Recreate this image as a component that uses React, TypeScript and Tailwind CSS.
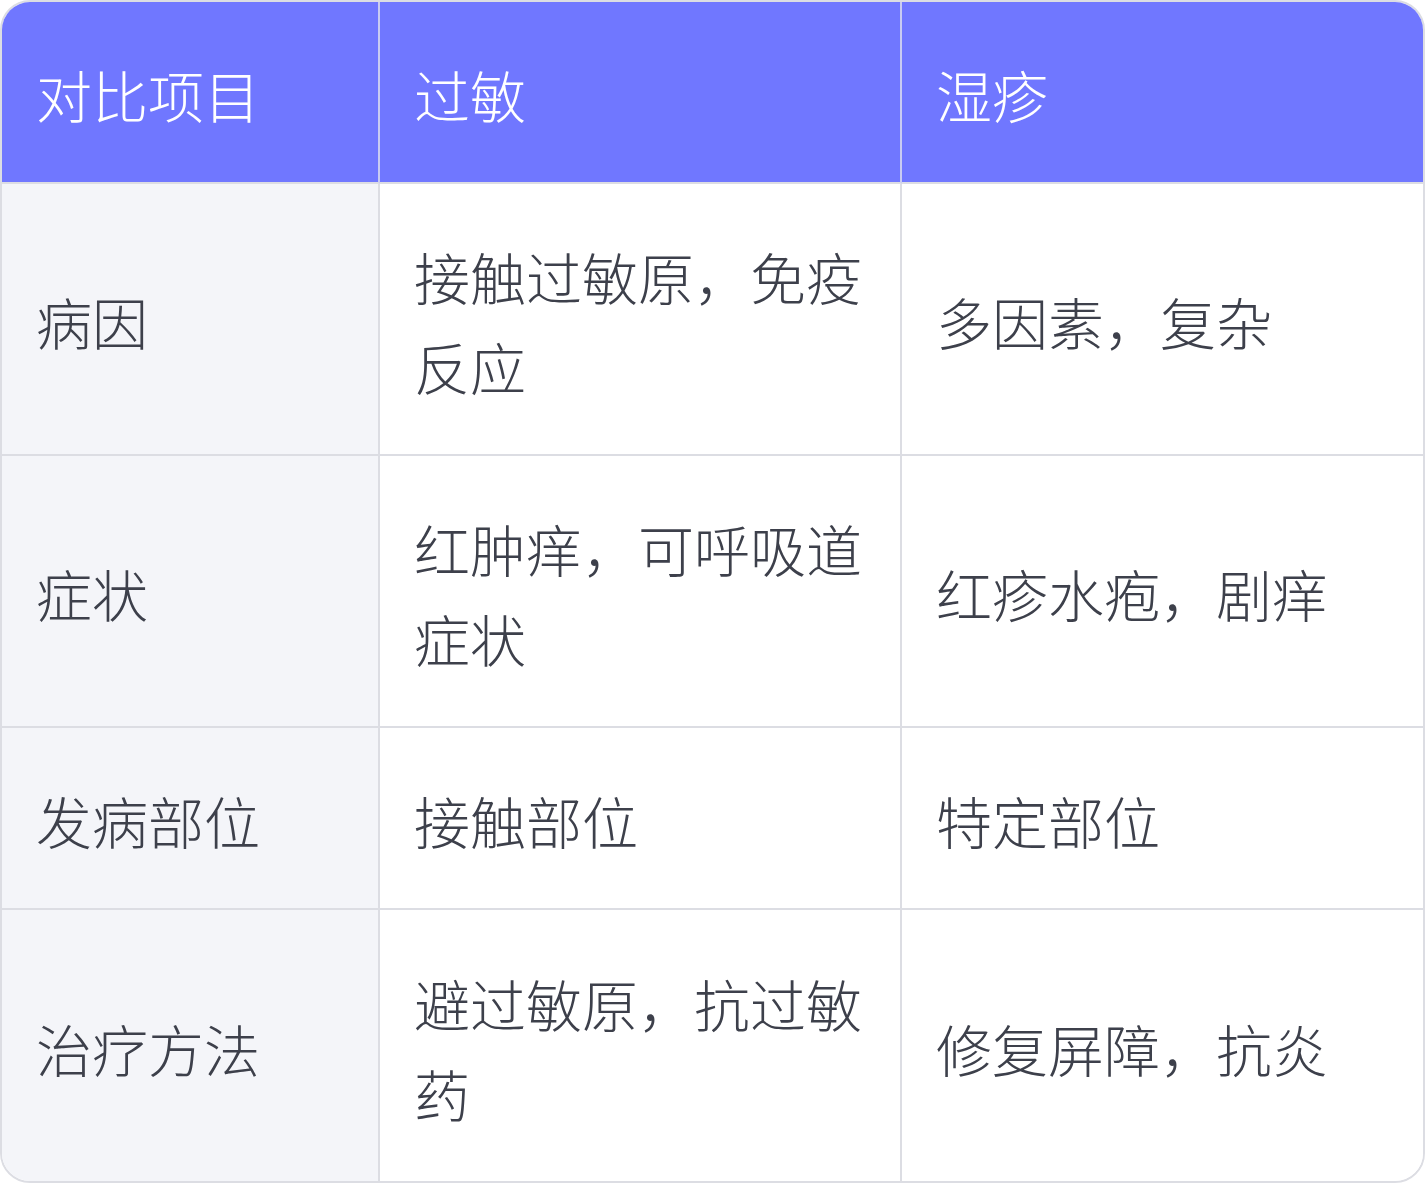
import * as React from "react";

const rows = [
  { label: "病因", allergy: "接触过敏原，免疫反应", eczema: "多因素，复杂" },
  { label: "症状", allergy: "红肿痒，可呼吸道症状", eczema: "红疹水疱，剧痒" },
  { label: "发病部位", allergy: "接触部位", eczema: "特定部位" },
  { label: "治疗方法", allergy: "避过敏原，抗过敏药", eczema: "修复屏障，抗炎" },
];

const font = { fontFamily: '"Noto Sans CJK SC", "Noto Sans", sans-serif' };

export default function App() {
  return (
    <div className="w-[1425px] h-[1183px] bg-white" style={font}>
      <div className="w-full h-full rounded-[30px] border-2 border-[#dcdde3] overflow-hidden grid grid-cols-[378px_522px_1fr] grid-rows-[182px_272px_272px_182px_1fr] text-[56px] leading-[90px] font-light">
        <div className="bg-[#7077ff] text-white flex items-center pl-[34px] pt-[4px] border-r-2 border-b-2 border-r-[#c9cbf2] border-b-[#dcdde3]">
          对比项目
        </div>
        <div className="bg-[#7077ff] text-white flex items-center pl-[34px] pt-[4px] border-r-2 border-b-2 border-r-[#c9cbf2] border-b-[#dcdde3]">
          过敏
        </div>
        <div className="bg-[#7077ff] text-white flex items-center pl-[34px] pt-[4px] border-b-2 border-b-[#dcdde3]">
          湿疹
        </div>
        {rows.map((row, i) => {
          const last = i === rows.length - 1;
          const bottom = last ? "" : "border-b-2";
          return (
            <React.Fragment key={row.label}>
              <div className={`bg-[#f4f5f9] text-[#3d404b] flex items-center pl-[34px] pr-[35px] pt-[4px] border-r-2 border-[#dcdde3] ${bottom}`}>
                {row.label}
              </div>
              <div className={`bg-white text-[#3d404b] flex items-center pl-[34px] pr-[35px] pt-[4px] border-r-2 border-[#dcdde3] ${bottom}`}>
                <span>{row.allergy}</span>
              </div>
              <div className={`bg-white text-[#3d404b] flex items-center pl-[34px] pr-[35px] pt-[4px] border-[#dcdde3] ${bottom}`}>
                {row.eczema}
              </div>
            </React.Fragment>
          );
        })}
      </div>
    </div>
  );
}
